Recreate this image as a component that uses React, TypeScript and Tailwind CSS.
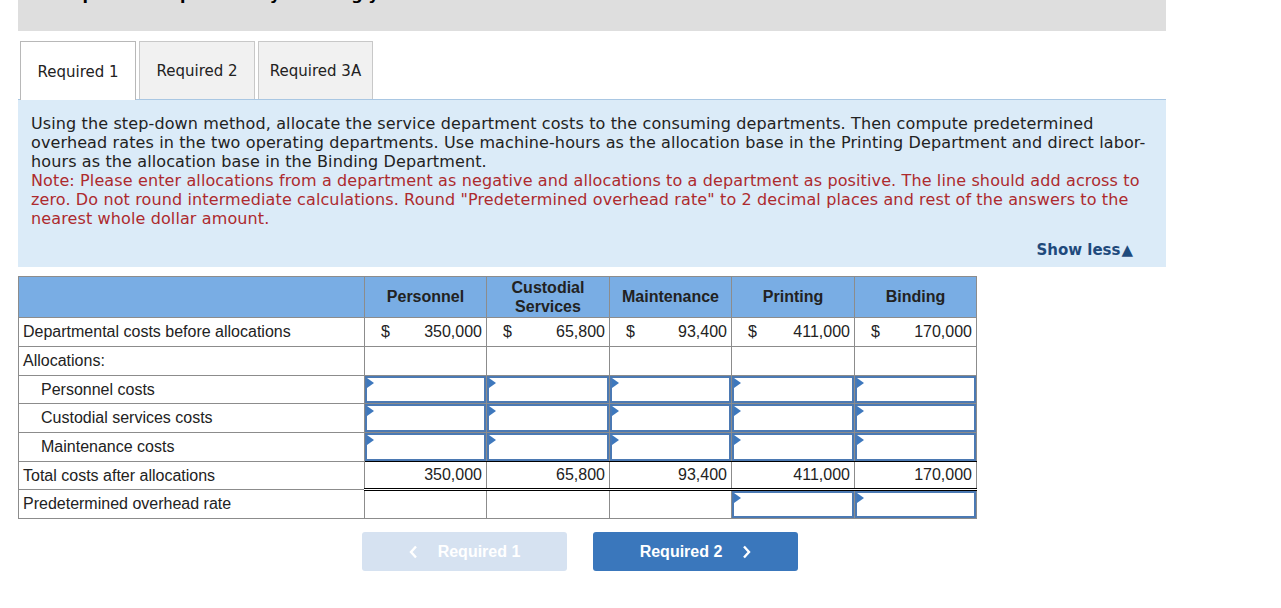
import React from "react";

const verdana = { fontFamily: '"DejaVu Sans", Verdana, sans-serif' };
const arial = { fontFamily: '"Liberation Sans", Arial, sans-serif' };

function Flag() {
  return (
    <svg className="absolute left-0 top-0" width="8" height="10" viewBox="0 0 8 10">
      <polygon points="0,0 7,5 0,10" fill="#3e78bd" />
    </svg>
  );
}

function InputCell({ last, short }: { last?: boolean; short?: boolean }) {
  return (
    <td
      className={
        last
          ? "p-0 border-x border-t border-x-[#8c8c8c] border-t-[#8c8c8c] border-b border-b-black"
          : "p-0 border border-[#8c8c8c]"
      }
    >
      <div className={short ? "relative h-[27px] border-2 border-[#4b79b3] bg-white" : "relative h-[28px] border-2 border-[#4b79b3] bg-white"}>
        <Flag />
      </div>
    </td>
  );
}

function AmountCell({ value, dollar }: { value: string; dollar?: boolean }) {
  return (
    <td className="border border-[#8c8c8c] h-[29px] px-[4px]">
      <div className="flex justify-between">
        <span className="pl-[12px]">{dollar ? "$" : ""}</span>
        <span>{value}</span>
      </div>
    </td>
  );
}

export default function App() {
  const cols = ["Personnel", "Custodial Services", "Maintenance", "Printing", "Binding"];
  const before = ["350,000", "65,800", "93,400", "411,000", "170,000"];
  return (
    <div className="w-[1281px] h-[608px] bg-white overflow-hidden text-[#222]">
      <div className="ml-[18px] w-[1148px]">
        {/* gray bar */}
        <div className="h-[31px] bg-[#dedede] overflow-hidden">
          <div
            className="mt-[-15px] pl-[25px] text-[16px] leading-[20px] font-bold text-black whitespace-nowrap"
            style={verdana}
          >
            Complete this question by entering your answers in the tabs below.
          </div>
        </div>

        {/* tabs */}
        <div className="mt-[10px] flex items-end pl-[2px] gap-[3px] text-[15px]" style={verdana}>
          <div className="w-[116px] h-[59px] pt-[2px] bg-white border border-b-0 border-[#b8b8b8] flex items-center justify-center relative z-10 mb-[-1px]">
            Required 1
          </div>
          <div className="w-[116px] h-[58px] pt-[2px] bg-[#f1f1f1] border border-b-0 border-[#c8c8c8] flex items-center justify-center">
            Required 2
          </div>
          <div className="w-[115px] h-[58px] pt-[2px] bg-[#f1f1f1] border border-b-0 border-[#c8c8c8] flex items-center justify-center">
            Required 3A
          </div>
        </div>

        {/* panel */}
        <div className="bg-[#dbebf8] border-t border-[#a9c7e3] h-[168px] pt-[14px] pl-[13px] pr-[33px]" style={verdana}>
          <div className="text-[16px] leading-[19px] tracking-[0.12px] whitespace-nowrap">
            <div>Using the step-down method, allocate the service department costs to the consuming departments. Then compute predetermined</div>
            <div>overhead rates in the two operating departments. Use machine-hours as the allocation base in the Printing Department and direct labor-</div>
            <div>hours as the allocation base in the Binding Department.</div>
            <div className="text-[#ad2a2e]">Note: Please enter allocations from a department as negative and allocations to a department as positive. The line should add across to</div>
            <div className="text-[#ad2a2e]">zero. Do not round intermediate calculations. Round "Predetermined overhead rate" to 2 decimal places and rest of the answers to the</div>
            <div className="text-[#ad2a2e]">nearest whole dollar amount.</div>
          </div>
          <div className="mt-[13px] flex justify-end items-center text-[15px] leading-[19px] font-bold text-[#1f4a7c]">
            <span>Show less</span>
            <span className="text-[15px] leading-[19px] ml-[1px]">▲</span>
          </div>
        </div>

        {/* table */}
        <table className="mt-[9px] border-collapse text-[16px] text-[#222]" style={arial}>
          <colgroup>
            <col className="w-[346px]" />
            <col className="w-[122px]" />
            <col className="w-[123px]" />
            <col className="w-[122px]" />
            <col className="w-[123px]" />
            <col className="w-[122px]" />
          </colgroup>
          <thead>
            <tr className="bg-[#79ade4] h-[41px]">
              <th className="border border-[#8c8c8c]"></th>
              {cols.map((c) => (
                <th key={c} className="border border-[#8c8c8c] font-bold text-center leading-[19px] px-[2px] pb-[1px]">
                  {c === "Custodial Services" ? (
                    <>
                      Custodial
                      <br />
                      Services
                    </>
                  ) : (
                    c
                  )}
                </th>
              ))}
            </tr>
          </thead>
          <tbody>
            <tr>
              <td className="border border-[#8c8c8c] h-[29px] px-[4px]">Departmental costs before allocations</td>
              {before.map((v) => (
                <AmountCell key={v} value={v} dollar />
              ))}
            </tr>
            <tr>
              <td className="border border-[#8c8c8c] h-[29px] px-[4px]">Allocations:</td>
              {before.map((v) => (
                <td key={v} className="border border-[#8c8c8c]"></td>
              ))}
            </tr>
            {["Personnel costs", "Custodial services costs", "Maintenance costs"].map((r, i) => (
              <tr key={r}>
                <td className="border border-[#8c8c8c] pl-[22px] leading-[18px]">{r}</td>
                {before.map((v) => (
                  <InputCell key={v} last={i === 2} short={i === 0} />
                ))}
              </tr>
            ))}
            <tr>
              <td className="border border-[#8c8c8c] h-[28px] px-[4px] leading-[18px]">Total costs after allocations</td>
              {before.map((v) => (
                <td
                  key={v}
                  className="border-x border-x-[#8c8c8c] border-t border-t-black border-b-[3px] border-b-black [border-bottom-style:double] h-[28px] px-[4px] text-right leading-[18px]"
                >
                  {v}
                </td>
              ))}
            </tr>
            <tr>
              <td className="border border-[#8c8c8c] px-[4px] leading-[18px]">Predetermined overhead rate</td>
              <td className="border border-[#8c8c8c]"></td>
              <td className="border border-[#8c8c8c]"></td>
              <td className="border border-[#8c8c8c]"></td>
              <InputCell short />
              <InputCell short />
            </tr>
          </tbody>
        </table>

        {/* buttons */}
        <div className="mt-[13px] ml-[344px] flex gap-[26px] text-[16px] font-bold text-white" style={arial}>
          <div className="w-[205px] h-[39px] rounded-[3px] bg-[#d6e2f1] flex items-center justify-center gap-[20px]">
            <svg width="9" height="14" viewBox="0 0 9 14">
              <polyline points="7,1.5 2,7 7,12.5" fill="none" stroke="white" strokeWidth="2.4" />
            </svg>
            <span>Required 1</span>
          </div>
          <div className="w-[205px] h-[39px] rounded-[3px] bg-[#3a77bc] flex items-center justify-center gap-[20px]">
            <span>Required 2</span>
            <svg width="9" height="14" viewBox="0 0 9 14">
              <polyline points="2,1.5 7,7 2,12.5" fill="none" stroke="white" strokeWidth="2.4" />
            </svg>
          </div>
        </div>
      </div>
    </div>
  );
}
